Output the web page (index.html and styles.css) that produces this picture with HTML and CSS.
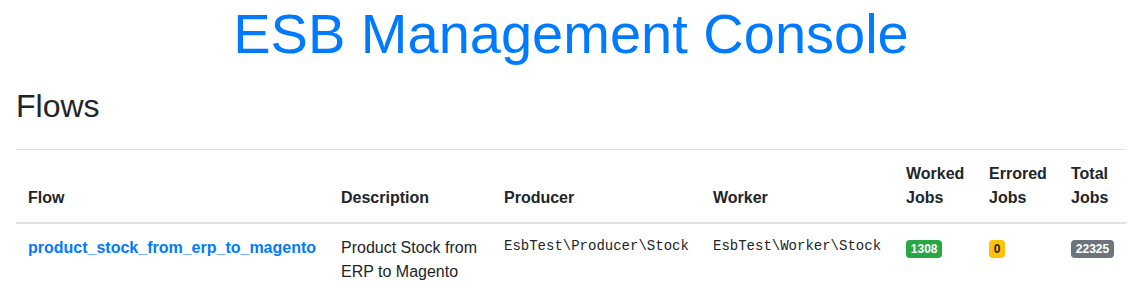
FILE: index.html
```html
<!DOCTYPE html>
<html lang="en">
<head>
    <meta charset="UTF-8">
    <meta name="viewport" content="width=device-width, initial-scale=1.0">
    <title>ESB Management Console</title>
    <link rel="stylesheet" href="styles.css">
</head>
<body>

<div class="container">
    <h1 class="title">ESB Management Console</h1>

    <h2 class="section-title">Flows</h2>

    <table class="flows-table">
        <thead>
            <tr>
                <th class="col-flow">Flow</th>
                <th class="col-description">Description</th>
                <th class="col-producer">Producer</th>
                <th class="col-worker">Worker</th>
                <th class="col-worked">Worked Jobs</th>
                <th class="col-errored">Errored Jobs</th>
                <th class="col-total">Total Jobs</th>
            </tr>
        </thead>
        <tbody>
            <tr>
                <td><a class="flow-link" href="#">product_stock_from_erp_to_magento</a></td>
                <td>Product Stock from ERP to Magento</td>
                <td><code class="class-name">EsbTest\Producer\Stock</code></td>
                <td><code class="class-name">EsbTest\Worker\Stock</code></td>
                <td><span class="badge badge-success">1308</span></td>
                <td><span class="badge badge-warning">0</span></td>
                <td><span class="badge badge-secondary">22325</span></td>
            </tr>
        </tbody>
    </table>
</div>

</body>
</html>
```

FILE: styles.css
```css
body {
    margin: 0;
    font-family: "Liberation Sans", Arial, sans-serif;
    font-size: 16px;
    line-height: 1.5;
    color: #212529;
    background-color: #fff;
}
.container {
    padding: 0 20px 0 16px;
}
.title {
    margin: 0 0 8px;
    font-size: 56px;
    font-weight: 400;
    line-height: 1.2;
    text-align: center;
    color: #007bff;
}
.section-title {
    margin: 20px 0 23px;
    font-size: 32px;
    font-weight: 400;
    line-height: 1.2;
}
.flows-table {
    width: 100%;
    table-layout: fixed;
    border-collapse: collapse;
}
.flows-table th,
.flows-table td {
    padding: 12px;
    text-align: left;
    vertical-align: top;
    border-top: 1px solid #dee2e6;
}
.flows-table thead th {
    vertical-align: bottom;
    border-bottom: 2px solid #dee2e6;
}
.col-flow { width: 289px; }
.col-description { width: 139px; }
.col-producer { width: 185px; }
.col-worker { width: 169px; }
.col-worked { width: 59px; }
.col-errored { width: 58px; }
.col-total { width: 43px; }
.flow-link {
    color: #007bff;
    font-weight: bold;
    text-decoration: none;
}
.class-name {
    display: block;
    font-family: "Liberation Mono", "Courier New", monospace;
    font-size: 14px;
    line-height: 1.5;
    color: #212529;
}
.badge {
    display: inline-block;
    padding: 3px 4.8px;
    font-size: 12px;
    font-weight: bold;
    line-height: 1;
    border-radius: 4px;
    color: #fff;
}
.badge-success {
    background-color: #28a745;
}
.badge-warning {
    background-color: #ffc107;
    color: #212529;
}
.badge-secondary {
    background-color: #6c757d;
}
```
